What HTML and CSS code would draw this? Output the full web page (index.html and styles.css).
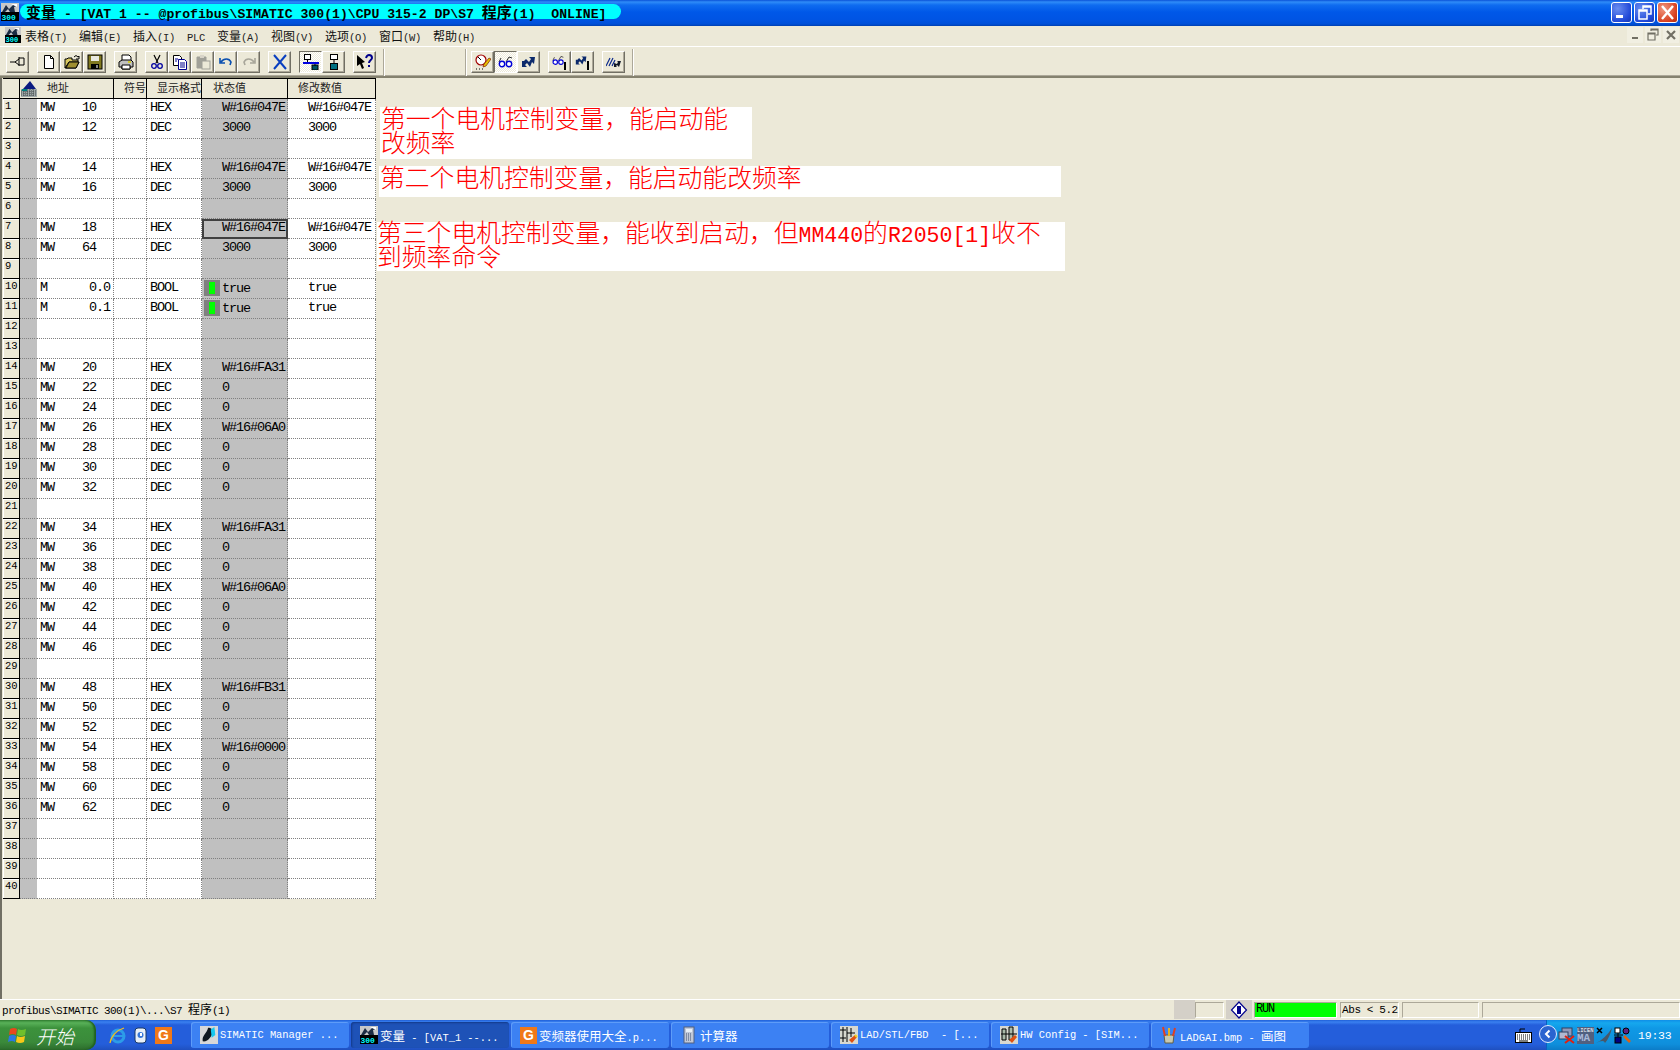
FILE: index.html
```html
<!DOCTYPE html>
<html lang="zh">
<head>
<meta charset="utf-8">
<title>变量 - [VAT_1]</title>
<link rel="stylesheet" href="styles.css">
</head>
<body>
<svg class="defs" xmlns="http://www.w3.org/2000/svg">
  <symbol id="s7" viewBox="0 0 18 18">
    <rect width="18" height="18" fill="#c8c8c8"/>
    <path d="M1 9 5 2l3 4 5-5h3v2l-3 1 1 5H9L7 6 4 9z" fill="#1c2c44"/>
    <path d="M10 1h6v3z" fill="#fff"/>
    <rect y="9" width="18" height="9" fill="#000"/>
    <text x="0.5" y="16.5" class="s7t">300</text>
  </symbol>
  <symbol id="gl" viewBox="0 0 16 16">
    <path d="M1 8 3 4M8 8l3-5 3 1" fill="none" stroke="#303030"/>
    <circle cx="4" cy="10" r="2.7" fill="#fff" stroke="#0000d8" stroke-width="1.4"/>
    <circle cx="11" cy="10" r="2.7" fill="#fff" stroke="#0000d8" stroke-width="1.4"/>
  </symbol>
  <symbol id="ar" viewBox="0 0 16 16">
    <path d="M1 7v6h5l-2-2 2-2 3 4 2-5 2 2 1-7h-6l2 2-2 3-3-3-2 2z" fill="#0c2a6c"/>
  </symbol>
</svg>
<div class="app">
  <header class="title">
    <svg class="ticon"><use href="#s7"/></svg>
    <div class="pill"><span class="c">变量</span> - [VAT_1 -- @profibus\SIMATIC 300(1)\CPU 315-2 DP\S7 <span class="c">程序</span>(1)  ONLINE]</div>
    <div class="winbtns">
      <div class="wb"><svg width="21" height="21" viewBox="0 0 21 21"><rect x="5" y="13" width="7" height="3" fill="#fff"/></svg></div>
      <div class="wb"><svg width="21" height="21" viewBox="0 0 21 21"><path d="M9 7V4h8v8h-3M5 8h8v9H5zM5 9h8M9 5h8" fill="none" stroke="#fff" stroke-width="1.5"/></svg></div>
      <div class="wb close"><svg width="21" height="21" viewBox="0 0 21 21"><path d="M5 4l11 13M16 4 5 17" stroke="#fff" stroke-width="2.4"/></svg></div>
    </div>
  </header>

  <nav class="menu">
    <svg class="micon"><use href="#s7"/></svg>
    <div class="mi">表格<i>(T)</i></div>
    <div class="mi">编辑<i>(E)</i></div>
    <div class="mi">插入<i>(I)</i></div>
    <div class="mi plc"><i>PLC</i></div>
    <div class="mi">变量<i>(A)</i></div>
    <div class="mi">视图<i>(V)</i></div>
    <div class="mi">选项<i>(O)</i></div>
    <div class="mi">窗口<i>(W)</i></div>
    <div class="mi">帮助<i>(H)</i></div>
    <div class="mdi">
      <div class="mb"><svg width="16" height="16" viewBox="0 0 16 16"><rect x="5" y="10" width="6" height="2" fill="#716f64"/></svg></div>
      <div class="mb"><svg width="16" height="16" viewBox="0 0 16 16"><path d="M6 4V2h7v6h-2M3 6h7v7H3zM3 7h7M6 3h7" fill="none" stroke="#716f64" stroke-width="1.2"/></svg></div>
      <div class="mb"><svg width="16" height="16" viewBox="0 0 16 16"><path d="M4 4l8 8M12 4l-8 8" stroke="#716f64" stroke-width="2.2"/></svg></div>
    </div>
  </nav>

  <div class="toolbar">
    <button class="tb"><svg viewBox="0 0 16 16"><path d="M0 8h5M5 8l4-3M9 3v9M9 4h5v7H9M5 8l4 3" fill="none" stroke="#000"/></svg></button>
    <button class="tb sp"><svg viewBox="0 0 16 16"><path d="M3.500 1.500h6l3 3v10h-9z" fill="#fff" stroke="#000"/><path d="M9.500 1.500v3h3" fill="none" stroke="#000"/></svg></button>
    <button class="tb"><svg viewBox="0 0 16 16"><path d="M1 14V5h2l1-1h4v2h6v2H5l-4 6h11l3-6" fill="#d8c860" stroke="#000"/><path d="M2 14l3-6h10l-3 6z" fill="#a09030" stroke="#000"/><path d="M10 3q2-3 4 0l1-1v3h-3" fill="none" stroke="#000"/></svg></button>
    <button class="tb"><svg viewBox="0 0 16 16"><rect x="1" y="1" width="14" height="14" fill="#807820" stroke="#000"/><rect x="4" y="2" width="8" height="5" fill="#e8e8e0"/><rect x="4" y="10" width="8" height="5" fill="#000"/><rect x="9" y="11" width="2" height="3" fill="#888"/></svg></button>
    <button class="tb sp"><svg viewBox="0 0 16 16"><path d="M4 7V1h7l2 2v4" fill="#fff" stroke="#000"/><path d="M1 8l3-2h9l2 2v5h-3v2H4v-2H1z" fill="#c0c0c0" stroke="#000"/><path d="M4 11h8v4H4z" fill="#fff" stroke="#000"/><path d="M10 8h3" stroke="#d8d000" stroke-width="1.500"/></svg></button>
    <button class="tb sp"><svg viewBox="0 0 16 16"><path d="M5 1l4 8M11 1 7 9" stroke="#000" stroke-width="1.200"/><circle cx="5" cy="12" r="2.300" fill="none" stroke="#0000a0" stroke-width="1.300"/><circle cx="11" cy="12" r="2.300" fill="none" stroke="#0000a0" stroke-width="1.300"/></svg></button>
    <button class="tb"><svg viewBox="0 0 16 16"><path d="M1.500 1.500h6l2 2v8h-8z" fill="#fff" stroke="#000"/><path d="M6.500 5.500h6l2 2v8h-8z" fill="#fff" stroke="#00008c"/><path d="M3 5h3M3 7h2M8 9h5M8 11h5M8 13h5" stroke="#00008c"/></svg></button>
    <button class="tb"><svg viewBox="0 0 16 16"><path d="M2 3h9v11H2z" fill="#a0a098" stroke="#a0a098"/><rect x="5" y="1" width="4" height="3" fill="#d8d4c8"/><rect x="7" y="7" width="8" height="8" fill="#ece9d8" stroke="#a0a098"/></svg></button>
    <button class="tb"><svg viewBox="0 0 16 16"><path d="M2 4v5h5M3 8c3-4 8-4 10 0l-1 3" fill="none" stroke="#0a4fb0" stroke-width="1.600"/></svg></button>
    <button class="tb"><svg viewBox="0 0 16 16"><path d="M14 4v5H9M13 8c-3-4-8-4-10 0l1 3" fill="none" stroke="#a8a69a" stroke-width="1.600"/></svg></button>
    <button class="tb sp"><svg viewBox="0 0 16 16"><path d="M2 1l12 14M14 1 2 15" stroke="#0a3fc0" stroke-width="2"/></svg></button>
    <button class="tb sp on"><svg viewBox="0 0 16 16"><rect x="1.500" y="0.500" width="6" height="5" fill="#fff" stroke="#000"/><path d="M4.500 6v3" stroke="#000"/><rect y="8" width="16" height="2" fill="#0000e0"/><rect x="9" y="11" width="6" height="5" fill="#005060" stroke="#000"/><path d="M12 10v2" stroke="#000"/></svg></button>
    <button class="tb"><svg viewBox="0 0 16 16"><rect x="4.500" y="0.500" width="7" height="5" fill="#fff" stroke="#000"/><path d="M8 6v4" stroke="#000"/><rect x="4.500" y="9.500" width="7" height="6" fill="#007080" stroke="#000"/></svg></button>
    <button class="tb sp"><svg viewBox="0 0 16 16"><path d="M0 1l8 7-3 1 2 5-2 1-2-5-3 2z" fill="#000"/><path d="M9 4q1-3 3-3 3 0 3 3c0 2-3 2-3 5" fill="none" stroke="#00008c" stroke-width="2"/><rect x="11" y="11" width="2" height="2" fill="#00008c"/></svg></button>
    <div class="sep s1"></div>
    <div class="sep s2"></div>
    <button class="tb"><svg viewBox="0 0 16 16"><circle cx="6" cy="6" r="5" fill="#fff" stroke="#a00000" stroke-width="1.200"/><path d="M3 3l3 3" stroke="#000"/><path d="M1 15h1M4 15h1M7 15h1" stroke="#000"/><path d="M8 13l1-3 5-6 2 1-5 7z" fill="#e8c000" stroke="#802000" stroke-width=".7"/></svg></button>
    <button class="tb on"><svg viewBox="0 0 16 16"><use href="#gl"/></svg></button>
    <button class="tb"><svg viewBox="0 0 16 16"><use href="#ar"/></svg></button>
    <button class="tb sp"><svg viewBox="0 0 16 16"><use href="#gl" width="13" height="13"/><rect x="12" y="8" width="2" height="8" fill="#000"/></svg></button>
    <button class="tb"><svg viewBox="0 0 16 16"><use href="#ar" width="13" height="13"/><rect x="12" y="7" width="2" height="9" fill="#000"/></svg></button>
    <button class="tb sp"><svg viewBox="0 0 16 16"><path d="M0 12 4 4M3 12l4-8M6 12l3-6" stroke="#0c2a8c" stroke-width="1.200"/><path d="M8 9v4h3l-1-1 1-1 2 2 2-6h-4l1 1-1 2z" fill="#101828"/></svg></button>
    <div class="sep s3"></div>
  </div>

  <main class="client">
    <table class="grid">
      <colgroup><col class="c0"><col class="c1"><col class="c2"><col class="c3"><col class="c4"><col class="c5"><col class="c6"></colgroup>
      <thead>
        <tr>
          <th class="corner"></th>
          <th class="mk"><svg width="16" height="17" viewBox="0 0 16 17"><path d="M2 9 9 1l6 8z" fill="#0a1a80"/><rect y="9" width="16" height="8" fill="#a0a8a8"/><path d="M0 11h16M0 13h16M0 15h16M3 9v8M6 9v8M9 9v8M12 9v8" stroke="#404848" stroke-dasharray="1 1"/><path d="M1 10h5" stroke="#008080" stroke-width="2"/></svg></th>
          <th>地址</th><th>符号</th><th>显示格式</th><th class="hs">状态值</th><th>修改数值</th>
        </tr>
      </thead>
      <tbody>
        <tr><th>1</th><td class="m"></td><td>MW    10</td><td></td><td>HEX</td><td class="v">W#16#047E</td><td class="w">W#16#047E</td></tr>
        <tr><th>2</th><td class="m"></td><td>MW    12</td><td></td><td>DEC</td><td class="v">3000</td><td class="w">3000</td></tr>
        <tr><th>3</th><td class="m"></td><td></td><td></td><td></td><td class="v"></td><td class="w"></td></tr>
        <tr><th>4</th><td class="m"></td><td>MW    14</td><td></td><td>HEX</td><td class="v">W#16#047E</td><td class="w">W#16#047E</td></tr>
        <tr><th>5</th><td class="m"></td><td>MW    16</td><td></td><td>DEC</td><td class="v">3000</td><td class="w">3000</td></tr>
        <tr><th>6</th><td class="m"></td><td></td><td></td><td></td><td class="v"></td><td class="w"></td></tr>
        <tr><th>7</th><td class="m"></td><td>MW    18</td><td></td><td>HEX</td><td class="v sel">W#16#047E</td><td class="w">W#16#047E</td></tr>
        <tr><th>8</th><td class="m"></td><td>MW    64</td><td></td><td>DEC</td><td class="v">3000</td><td class="w">3000</td></tr>
        <tr><th>9</th><td class="m"></td><td></td><td></td><td></td><td class="v"></td><td class="w"></td></tr>
        <tr><th>10</th><td class="m"></td><td>M      0.0</td><td></td><td>BOOL</td><td class="v b"><span class="lamp"></span>true</td><td class="w">true</td></tr>
        <tr><th>11</th><td class="m"></td><td>M      0.1</td><td></td><td>BOOL</td><td class="v b"><span class="lamp"></span>true</td><td class="w">true</td></tr>
        <tr><th>12</th><td class="m"></td><td></td><td></td><td></td><td class="v"></td><td class="w"></td></tr>
        <tr><th>13</th><td class="m"></td><td></td><td></td><td></td><td class="v"></td><td class="w"></td></tr>
        <tr><th>14</th><td class="m"></td><td>MW    20</td><td></td><td>HEX</td><td class="v">W#16#FA31</td><td class="w"></td></tr>
        <tr><th>15</th><td class="m"></td><td>MW    22</td><td></td><td>DEC</td><td class="v">0</td><td class="w"></td></tr>
        <tr><th>16</th><td class="m"></td><td>MW    24</td><td></td><td>DEC</td><td class="v">0</td><td class="w"></td></tr>
        <tr><th>17</th><td class="m"></td><td>MW    26</td><td></td><td>HEX</td><td class="v">W#16#06A0</td><td class="w"></td></tr>
        <tr><th>18</th><td class="m"></td><td>MW    28</td><td></td><td>DEC</td><td class="v">0</td><td class="w"></td></tr>
        <tr><th>19</th><td class="m"></td><td>MW    30</td><td></td><td>DEC</td><td class="v">0</td><td class="w"></td></tr>
        <tr><th>20</th><td class="m"></td><td>MW    32</td><td></td><td>DEC</td><td class="v">0</td><td class="w"></td></tr>
        <tr><th>21</th><td class="m"></td><td></td><td></td><td></td><td class="v"></td><td class="w"></td></tr>
        <tr><th>22</th><td class="m"></td><td>MW    34</td><td></td><td>HEX</td><td class="v">W#16#FA31</td><td class="w"></td></tr>
        <tr><th>23</th><td class="m"></td><td>MW    36</td><td></td><td>DEC</td><td class="v">0</td><td class="w"></td></tr>
        <tr><th>24</th><td class="m"></td><td>MW    38</td><td></td><td>DEC</td><td class="v">0</td><td class="w"></td></tr>
        <tr><th>25</th><td class="m"></td><td>MW    40</td><td></td><td>HEX</td><td class="v">W#16#06A0</td><td class="w"></td></tr>
        <tr><th>26</th><td class="m"></td><td>MW    42</td><td></td><td>DEC</td><td class="v">0</td><td class="w"></td></tr>
        <tr><th>27</th><td class="m"></td><td>MW    44</td><td></td><td>DEC</td><td class="v">0</td><td class="w"></td></tr>
        <tr><th>28</th><td class="m"></td><td>MW    46</td><td></td><td>DEC</td><td class="v">0</td><td class="w"></td></tr>
        <tr><th>29</th><td class="m"></td><td></td><td></td><td></td><td class="v"></td><td class="w"></td></tr>
        <tr><th>30</th><td class="m"></td><td>MW    48</td><td></td><td>HEX</td><td class="v">W#16#FB31</td><td class="w"></td></tr>
        <tr><th>31</th><td class="m"></td><td>MW    50</td><td></td><td>DEC</td><td class="v">0</td><td class="w"></td></tr>
        <tr><th>32</th><td class="m"></td><td>MW    52</td><td></td><td>DEC</td><td class="v">0</td><td class="w"></td></tr>
        <tr><th>33</th><td class="m"></td><td>MW    54</td><td></td><td>HEX</td><td class="v">W#16#0000</td><td class="w"></td></tr>
        <tr><th>34</th><td class="m"></td><td>MW    58</td><td></td><td>DEC</td><td class="v">0</td><td class="w"></td></tr>
        <tr><th>35</th><td class="m"></td><td>MW    60</td><td></td><td>DEC</td><td class="v">0</td><td class="w"></td></tr>
        <tr><th>36</th><td class="m"></td><td>MW    62</td><td></td><td>DEC</td><td class="v">0</td><td class="w"></td></tr>
        <tr><th>37</th><td class="m"></td><td></td><td></td><td></td><td class="v"></td><td class="w"></td></tr>
        <tr><th>38</th><td class="m"></td><td></td><td></td><td></td><td class="v"></td><td class="w"></td></tr>
        <tr><th>39</th><td class="m"></td><td></td><td></td><td></td><td class="v"></td><td class="w"></td></tr>
        <tr><th>40</th><td class="m"></td><td></td><td></td><td></td><td class="v"></td><td class="w"></td></tr>
      </tbody>
    </table>
    <div class="note n1"><div class="nt">第一个电机控制变量&#xFF0C;能启动能改频率</div></div>
    <div class="note n2"><div class="nt">第二个电机控制变量&#xFF0C;能启动能改频率</div></div>
    <div class="note n3"><div class="nt">第三个电机控制变量&#xFF0C;能收到启动&#xFF0C;但<span class="lat">MM440</span>的<span class="lat">R2050[1]</span>收不到频率命令</div></div>
  </main>

  <footer class="status">
    <div class="stext">profibus\SIMATIC 300(1)\...\S7 <span class="c">程序</span>(1)</div>
    <div class="sgray"></div>
    <div class="sbox b1"></div>
    <div class="sdia"><svg width="18" height="18" viewBox="0 0 18 18"><path d="M9 1l7.500 8L9 17 1.500 9z" fill="#fff" stroke="#00008c" stroke-width="1.200"/><rect x="7" y="5" width="4" height="8" fill="#00008c"/></svg></div>
    <div class="sbox run">RUN</div>
    <div class="sbox abs">Abs &lt; 5.2</div>
    <div class="sbox b2"></div>
    <div class="sbox b3"></div>
  </footer>

  <div class="taskbar">
    <div class="start">
      <svg width="20" height="20" viewBox="0 0 20 20"><path d="M2 4q4-2 7 0l-1 6q-3-2-7 0z" fill="#e8481c"/><path d="M10 4q3 2 8 0l-1 6q-4 2-8 0z" fill="#6fc02c"/><path d="M1 11q4-2 7 0l-1 6q-3-2-7 0z" fill="#2c78e0"/><path d="M9 11q3 2 8 0l-1 6q-4 2-8 0z" fill="#f8c818"/></svg>
      <span>开始</span>
    </div>
    <div class="quick">
      <svg width="17" height="17" viewBox="0 0 17 17"><circle cx="9" cy="9" r="6" fill="none" stroke="#2c9ce8" stroke-width="3"/><path d="M4 9h10" stroke="#2c9ce8" stroke-width="2"/><path d="M1 16C2 9 8 3 15 1" fill="none" stroke="#f0c020" stroke-width="1.300"/></svg>
      <svg width="17" height="17" viewBox="0 0 17 17"><rect x="3" y="1" width="11" height="15" rx="3" fill="#e8f0f8" stroke="#183868"/><circle cx="8.500" cy="8" r="3" fill="#3878d8"/><path d="M8 6h2v3H8z" fill="#fff"/></svg>
      <div class="gi">G</div>
    </div>
    <div class="tasks">
      <div class="task"><svg width="18" height="18" viewBox="0 0 20 20"><rect width="20" height="20" fill="#d8d8d8"/><path d="M3 17C2 10 8 8 9 2c3 0 6 2 6 4-2 5-6 12-12 11z" fill="#101820"/><path d="M12 4l4-3 1 9-4 3z" fill="#18c8f0"/></svg><span>SIMATIC Manager ...</span></div>
      <div class="task act"><svg width="18" height="18"><use href="#s7"/></svg><span><span class="c">变量</span> - [VAT_1 --...</span></div>
      <div class="task"><div class="gi">G</div><span><span class="c">变频器使用大全</span>.p...</span></div>
      <div class="task"><svg width="18" height="18" viewBox="0 0 18 18"><rect x="4" y="1" width="10" height="16" fill="#c0c8d8" stroke="#506080"/><rect x="6" y="3" width="6" height="3" fill="#e8f0f8"/><path d="M6 8h6M6 10h6M6 12h6M6 14h6" stroke="#405070" stroke-dasharray="1 1"/></svg><span class="c">计算器</span></div>
      <div class="task"><svg width="18" height="18" viewBox="0 0 18 18"><rect width="18" height="18" fill="#d8d8d0"/><path d="M0 4h6M0 12h6M3 1v15M7 1v15M7 7h8M11 2v9" stroke="#000"/><path d="M9 14l6-5 2 2-5 6z" fill="#e05010"/><path d="M15 9l2 2" stroke="#f0d020" stroke-width="2"/></svg><span>LAD/STL/FBD  - [...</span></div>
      <div class="task"><svg width="18" height="18" viewBox="0 0 18 18"><rect width="18" height="18" fill="#d8d8d0"/><path d="M2 3h4v11H2zM9 1h4v13H9z" fill="#a8b8a8" stroke="#000"/><path d="M1 8h16" stroke="#000"/><path d="M9 14l6-5 2 2-5 6z" fill="#e05010"/></svg><span>HW Config - [SIM...</span></div>
      <div class="task"><svg width="18" height="18" viewBox="0 0 18 18"><path d="M4 9h10l-1 8H5z" fill="#c8c8b0" stroke="#606048"/><path d="M5 10 3 1M9 10V2M13 10l2-8" stroke="#e04020" stroke-width="2"/><path d="M9 10V2" stroke="#e8b020" stroke-width="2"/></svg><span>LADGAI.bmp - <span class="c">画图</span></span></div>
    </div>
    <div class="kbd"><svg width="17" height="15" viewBox="0 0 17 15"><path d="M5 4V1h5" fill="none" stroke="#000"/><rect x="0.500" y="4.500" width="16" height="10" fill="#fff" stroke="#000"/><path d="M2 7h13M2 9h13M2 11h13" stroke="#000" stroke-dasharray="1 1"/><path d="M4 13h9" stroke="#000"/></svg></div>
    <div class="tray">
      <div class="chev"><svg width="10" height="10" viewBox="0 0 10 10"><path d="M6.500 1.500 3 5l3.500 3.500" fill="none" stroke="#fff" stroke-width="2"/></svg></div>
      <svg width="17" height="17" viewBox="0 0 17 17"><rect x="4" y="1" width="10" height="8" fill="#9098b8" stroke="#304060"/><rect x="1" y="5" width="9" height="7" fill="#b0b8d0" stroke="#304060"/><path d="M7 9l9 7M16 9l-9 7" stroke="#e02010" stroke-width="2"/></svg>
      <div class="lic"><span>LICEN</span><b>MA</b></div>
      <svg width="17" height="17" viewBox="0 0 17 17"><path d="M0 16Q9 12 16 1 14 10 9 16 8 12 0 16z" fill="#485868"/><path d="M1 1l5 5M6 1 1 6" stroke="#000" stroke-width="1.500"/></svg>
      <svg width="18" height="17" viewBox="0 0 18 17"><rect x="1" y="1" width="5" height="5" fill="#fff" stroke="#000"/><rect x="1" y="10" width="6" height="6" fill="#000080" stroke="#000"/><path d="M0 8h9M4 6v4" stroke="#000"/><circle cx="12" cy="4" r="3" fill="#602080" stroke="#000"/><path d="M10 9l6 6" stroke="#e06010" stroke-width="2.500"/></svg>
      <div class="clock">19:33</div>
    </div>
  </div>
</div>
</body>
</html>
```
FILE: styles.css
```css
* { box-sizing: border-box; }
html, body { margin: 0; padding: 0; height: 100%; overflow: hidden; }
body { background: #ece9d8; font-family: "Liberation Mono", "Noto Sans CJK SC", monospace; color: #000; }
.defs { display: none; }
.s7t { font: bold 8px "Liberation Mono", monospace; fill: #00ffff; }
.app { width: 1680px; height: 1050px; display: flex; flex-direction: column; }

.title { height: 26px; display: flex; align-items: flex-start; padding-left: 1px;
  background: linear-gradient(#0a52d8 0, #2f8cf8 2px, #0f6cf0 5px, #0058e8 12px, #0054e3 20px, #0050d8 24px, #0040b0 26px); }
.ticon { width: 18px; height: 20px; margin-top: 2px; flex: none; }
.pill { margin: 4px 0 0 1px; width: 601px; height: 15px; line-height: 15px; background: #00ffff; border-radius: 8px; padding-left: 6px;
  font-size: 13.15px; font-weight: bold; white-space: pre; color: #000; }
.pill .c { font-size: 15px; line-height: 15px; }
.c { font-family: "Noto Sans CJK SC", sans-serif; font-size: 12.5px; }
.winbtns { margin-left: auto; display: flex; gap: 2px; padding: 2px 2px 0 0; }
.wb { width: 21px; height: 21px; border: 1px solid #fff; border-radius: 3px; background: radial-gradient(circle at 30% 30%, #6a8ef0, #2048d8 70%, #1838b0); display: flex; }
.wb svg { margin: -1px; flex: none; }
.wb.close { background: radial-gradient(circle at 30% 30%, #f09880, #d84020 70%, #b03010); }

.menu { height: 21px; display: flex; align-items: center; border-bottom: 1px solid #fff; padding: 0 0 2px 5px; font-family: "Noto Sans CJK SC", sans-serif; font-size: 12px; }
.micon { width: 16px; height: 16px; flex: none; margin-right: 4px; }
.mi { width: 54px; white-space: nowrap; color: #111; }
.mi i { font: normal 10.500px "Liberation Mono", monospace; letter-spacing: -.3px; color: #222; }
.mi.plc { width: 30px; }
.mdi { margin-left: auto; display: flex; gap: 2px; padding-right: 1px; }
.mb { width: 16px; height: 16px; background: #f1efe2; }

.toolbar { height: 31px; display: flex; align-items: flex-start; padding: 4px 0 0 6px; border-bottom: 2px solid #85826f; box-shadow: inset 0 -1px 0 #aca899; }
.tb { width: 23px; height: 22px; padding: 2px 3px; margin: 0; background: #ece9d8; border: 1px solid; border-color: #fff #716f64 #716f64 #fff; box-shadow: inset -1px -1px 0 #aca899; display: block; flex: none; }
.tb svg { width: 16px; height: 16px; display: block; }
.tb.sp { margin-left: 8px; }
.tb.on { background: repeating-conic-gradient(#fff 0 25%, #ece9d8 0 50%) 0 0 / 2px 2px; border-color: #716f64 #fff #fff #716f64; box-shadow: none; }
.sep { width: 2px; height: 27px; margin-top: -2px; flex: none; border-left: 1px solid #aca899; border-right: 1px solid #fff; }
.s1 { margin-left: 7px; }
.s2 { margin: -2px 4px 0 80px; }
.s3 { margin-left: 7px; }

.client { flex: 1; position: relative; border-left: 2px solid #716f64; min-height: 0; }
.grid { margin: 0 0 0 1px; border-collapse: separate; border-spacing: 0; table-layout: fixed; width: 373px; font-size: 13.5px; letter-spacing: -1.1px; }
.c0 { width: 17px; } .c1 { width: 17px; } .c2 { width: 77px; } .c3 { width: 33px; } .c4 { width: 55px; } .c5 { width: 86px; } .c6 { width: 88px; }
.grid td, .grid th { height: 20px; padding: 0; overflow: hidden; white-space: pre; }
thead th { text-align: left; padding: 0 0 3px 10px !important; font: 400 11px "Noto Sans CJK SC", sans-serif; letter-spacing: 0; color: #222;
  border-top: 1px solid #000; border-bottom: 1px solid #000; border-right: 1px solid #000; background: #ece9d8; }
thead th.corner, thead th.mk { padding: 0 !important; line-height: 0; border-right: 0; }
thead th.mk { padding-left: 1px !important; }
thead th.corner { border-right: 1px solid #000; }
thead th.hs { padding-left: 11px !important; }
tbody th { background: #ece9d8; border-bottom: 1px solid #000; border-right: 1px solid #000; font: 400 10.500px/14px "Liberation Mono", monospace; letter-spacing: 0; text-align: left; vertical-align: top; padding: 0 0 0 2px !important; box-shadow: inset 1px 1px 0 #fff; }
tbody td { background: #fff; border-bottom: 1px dotted #808080; border-right: 1px dotted #808080; padding: 0 0 1px 3px !important; line-height: 16px; color: #000; }
tbody td.m { background: #c0c0c0; border-right: 1px solid #c0c0c0; }
tbody td.v { background: #c0c0c0; padding-left: 20px !important; }
tbody td.w { padding-left: 20px !important; }
tbody td.v.b { padding: 0 0 1px 2px !important; }
tbody td.sel { outline: 2px solid #404040; outline-offset: -2px; }
.lamp { display: inline-block; width: 16px; height: 16px; margin-right: 2px; vertical-align: middle; background: linear-gradient(90deg, #808080 5px, #00ff00 5px, #00ff00 11px, #808080 11px); border-top: 2px solid #808080; border-bottom: 2px solid #808080; }

.note { position: absolute; background: #fff; color: #ff0000; font: 300 24.800px/23.500px "Noto Sans CJK SC", sans-serif; letter-spacing: 0; display: flow-root; }
.lat { font-family: "Liberation Mono", monospace; font-size: 21.500px; letter-spacing: 0; line-height: 0; }
.n1 { left: 378px; top: 29px; width: 372px; height: 52px; padding-left: 1px; }
.n1 .nt { margin-top: -1px; }
.n2 { left: 377px; top: 88px; width: 682px; height: 31px; padding-left: 1px; }
.n2 .nt { margin-top: -1px; }
.n3 { left: 375px; top: 144px; width: 688px; height: 49px; padding-right: 6px; }
.n3 .nt { margin-top: -2px; }

.status { height: 21px; flex: none; display: flex; border-top: 1px solid #fff; padding-top: 2px; font-size: 10px; }
.stext { width: 1175px; font-size: 11px; letter-spacing: -.6px; line-height: 13px; padding-left: 2px; white-space: pre; }
.stext .c { font-size: 12px; letter-spacing: 0; }
.sgray { width: 21px; height: 19px; margin-top: -2px; background: #d4d0c8; }
.sbox { height: 16px; border: 1px solid; border-color: #aca899 #fff #fff #aca899; flex: none; white-space: pre; }
.b1 { width: 29px; }
.sdia { width: 26px; height: 19px; margin: -2px 2px 0 2px; background: #d4d0c8; display: flex; align-items: center; justify-content: center; }
.run { width: 83px; background: #00ff00; font-size: 12px; letter-spacing: -1.200px; line-height: 12px; padding-left: 1px; margin-right: 3px; }
.abs { width: 59px; font-size: 11px; letter-spacing: -.4px; line-height: 15px; padding-left: 1px; margin-right: 3px; }
.b2 { width: 77px; margin-right: 3px; }
.b3 { width: 198px; }

.taskbar { height: 30px; flex: none; display: flex; align-items: stretch; color: #fff; font-size: 10.400px;
  background: linear-gradient(#1f5fd8 0, #3a80f0 2px, #245edb 5px, #245edb 24px, #1f50c0 30px); }
.start { width: 96px; flex: none; display: flex; align-items: center; gap: 8px; padding-left: 8px; border-radius: 0 10px 10px 0;
  background: linear-gradient(#3a8c3a 0, #58b058 3px, #3c923c 8px, #3a8a3a 22px, #2d6c2d 30px); box-shadow: inset -2px 0 2px #1f5f1f; }
.start span { font: italic 300 19px "Noto Sans CJK SC", sans-serif; color: #fff; }
.quick { width: 95px; flex: none; display: flex; align-items: center; gap: 6px; padding-left: 13px; }
.gi { width: 17px; height: 17px; flex: none; background: #f07818; color: #fff; font: bold 14px/17px "Liberation Sans", sans-serif; text-align: center; }
.tasks { display: flex; gap: 2px; align-items: center; flex: none; }
.task { width: 158px; height: 26px; border-radius: 3px; background: #3c81f3; box-shadow: inset 1px 1px 0 #5e9cf8; display: flex; align-items: center; gap: 2px; padding-left: 9px; white-space: pre; }
.task svg, .task .gi { flex: none; }
.task.act { background: #1e52b7; box-shadow: inset 1px 1px 2px #143a88; }
.kbd { margin-left: 206px; width: 17px; display: flex; align-items: center; flex: none; }
.tray { margin-left: 14px; flex: 1; display: flex; align-items: center; position: relative; padding-left: 11px; gap: 1px;
  background: linear-gradient(#0f8ee8 0, #16a8ee 3px, #0f99e6 8px, #0f8fdc 24px, #0c7cc8 30px); border-left: 1px solid #0a5fc0; }
.chev { position: absolute; left: -8px; top: 5px; width: 18px; height: 18px; border-radius: 50%; border: 1px solid #e0ecff; background: #2a64d0; display: flex; align-items: center; justify-content: center; }
.lic { width: 17px; height: 17px; background: #506080; color: #fff; font-size: 5.500px; line-height: 7px; overflow: hidden; flex: none; margin: 0 1px; }
.lic span { display: block; }
.lic b { display: block; font-size: 11px; line-height: 9px; color: #a8b8d8; }
.clock { margin-left: 5px; font-size: 11.500px; letter-spacing: -.2px; }
```
